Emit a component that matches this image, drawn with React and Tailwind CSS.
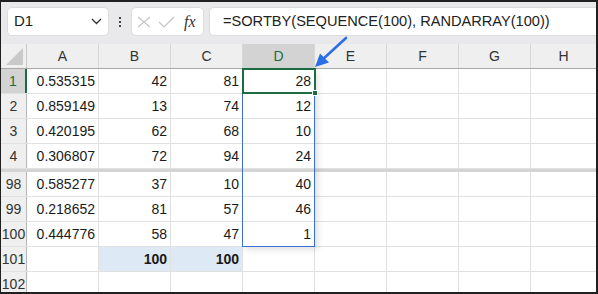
import React from 'react';

const font = { fontFamily: '"Liberation Sans", Arial, sans-serif' };

const cols = ['A', 'B', 'C', 'D', 'E', 'F', 'G'];

const rows = [
  { n: '1', a: '0.535315', b: '42', c: '81', d: '28', active: true },
  { n: '2', a: '0.859149', b: '13', c: '74', d: '12' },
  { n: '3', a: '0.420195', b: '62', c: '68', d: '10' },
  { n: '4', a: '0.306807', b: '72', c: '94', d: '24', gap: true },
  { n: '98', a: '0.585277', b: '37', c: '10', d: '40' },
  { n: '99', a: '0.218652', b: '81', c: '57', d: '46' },
  { n: '100', a: '0.444776', b: '58', c: '47', d: '1' },
  { n: '101', a: '', b: '100', c: '100', d: '', total: true },
  { n: '102', a: '', b: '', c: '', d: '' },
];

// 表のセル
const Cell = ({ children, className = '' }) => (
  <div className={`w-[72px] shrink-0 h-full border-r border-[#e1e1e1] flex items-center justify-end pr-[3px] ${className}`}>
    {children}
  </div>
);

export default function App() {
  return (
    <div className="relative w-[598px] h-[294px] bg-[#202020] pt-[2px] pr-[2px] pb-[2px] pl-[1px] overflow-hidden" style={font}>
      <div className="w-full h-full bg-white flex flex-col overflow-hidden">
        {/* toolbar */}
        <div className="h-[42px] shrink-0 bg-[#e9e9eb] flex items-start pt-[5px]">
          <div className="ml-[6px] w-[102px] h-[29px] bg-white rounded-[5px] border border-[#dcdcdc] flex items-center justify-between pl-[6px] pr-[6px]">
            <span className="text-[15px] text-[#222]">D1</span>
            <svg width="11" height="7" viewBox="0 0 11 7"><path d="M1 1l4.5 4.5L10 1" fill="none" stroke="#333" strokeWidth="1.3" /></svg>
          </div>
          <div className="w-[22px] h-[29px] flex flex-col items-center justify-center gap-[2px]">
            <div className="w-[2px] h-[2px] bg-[#444]" />
            <div className="w-[2px] h-[2px] bg-[#444]" />
            <div className="w-[2px] h-[2px] bg-[#444]" />
          </div>
          <div className="w-[73px] h-[29px] bg-white rounded-[5px] border border-[#dcdcdc] flex items-center pl-[5px] gap-[7px]">
            <svg width="14" height="12" viewBox="0 0 14 12"><path d="M1 1l12 10M13 1L1 11" stroke="#c4c4c4" strokeWidth="1.2" /></svg>
            <svg width="17" height="12" viewBox="0 0 17 12"><path d="M1 6l5 5L16 1" fill="none" stroke="#c4c4c4" strokeWidth="1.2" /></svg>
            <span className="text-[16px] italic text-[#333] ml-[2px]" style={{ fontFamily: '"Liberation Serif", serif' }}>fx</span>
          </div>
          <div className="ml-[5px] flex-1 h-[29px] bg-white rounded-l-[5px] border border-r-0 border-[#dcdcdc] flex items-center pl-[13px]">
            <span className="text-[14.6px] text-[#222] whitespace-nowrap">=SORTBY(SEQUENCE(100), RANDARRAY(100))</span>
          </div>
        </div>

        {/* column headers */}
        <div className="h-[25px] shrink-0 flex bg-[#efefef] border-b border-[#a8a8a8] text-[14px] text-[#333]">
          <div className="w-[26px] shrink-0 h-full border-r border-[#c8c8c8] relative">
            <svg className="absolute left-[5px] top-[4px]" width="17" height="17" viewBox="0 0 17 17"><path d="M17 0V17H0Z" fill="#c9c9c9" /></svg>
          </div>
          {cols.map((c) => (
            <div
              key={c}
              className={`w-[72px] shrink-0 h-full border-r border-[#d8d8d8] flex items-center justify-center ${c === 'D' ? 'bg-[#d3d3d3] text-[#1d6b40]' : ''}`}
            >
              {c}
            </div>
          ))}
          <div className="flex-1 h-full flex items-center justify-center">H</div>
        </div>

        {/* body */}
        <div className="relative flex-1 text-[14px] text-[#1a1a1a]">
          {rows.map((r) => (
            <React.Fragment key={r.n}>
              <div className="h-[25px] flex border-b border-[#e1e1e1]">
                <div
                  className={`w-[26px] shrink-0 h-full border-r flex items-center justify-center overflow-hidden ${
                    r.active ? 'bg-[#d3d3d3] text-[#1d6b40] border-r-2 border-[#1d6b40]' : 'bg-[#efefef] text-[#333] border-[#b5b5b5]'
                  }`}
                >
                  <span className="whitespace-nowrap">{r.n}</span>
                </div>
                <Cell>{r.a}</Cell>
                <Cell className={r.total ? 'bg-[#dde9f4] font-bold' : ''}>{r.b}</Cell>
                <Cell className={r.total ? 'bg-[#dde9f4] font-bold' : ''}>{r.c}</Cell>
                <Cell>{r.d}</Cell>
                <Cell />
                <Cell />
                <Cell />
                <div className="flex-1 h-full" />
              </div>
              {r.gap && <div className="h-[3px] bg-[#d4d4d4]" />}
            </React.Fragment>
          ))}

          {/* spill range outline */}
          <div className="absolute left-[241px] top-0 w-[73px] h-[178px] border border-t-0 border-[#3a6fd4] shadow-[3px_3px_6px_rgba(0,0,0,0.12)]" />
          {/* active cell */}
          <div className="absolute left-[241px] -top-[1px] w-[74px] h-[26px] border-2 border-[#1d6b40]">
            <div className="absolute -right-[4px] -bottom-[4px] w-[6px] h-[6px] bg-[#1d6b40] border border-white" />
          </div>
        </div>
      </div>

      {/* arrow */}
      <svg className="absolute left-0 top-0 pointer-events-none" width="598" height="294" viewBox="0 0 598 294">
        <line x1="346" y1="38" x2="322" y2="60" stroke="#2a6fe6" strokeWidth="2.6" strokeLinecap="round" />
        <path d="M315 67L329 62.5L320 53.5Z" fill="#2a6fe6" />
      </svg>
    </div>
  );
}
